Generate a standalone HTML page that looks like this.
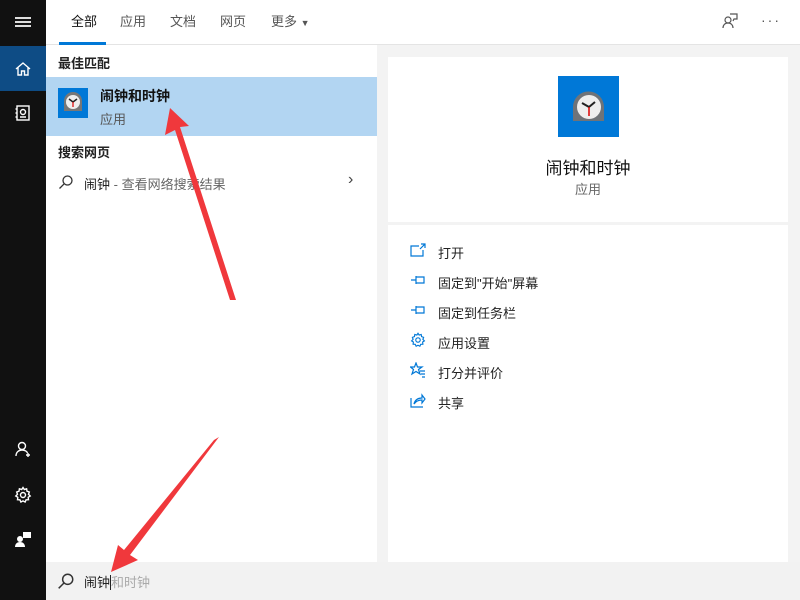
<!DOCTYPE html>
<html><head><meta charset="utf-8"><style>
*{margin:0;padding:0;box-sizing:border-box}
body{width:800px;height:600px;overflow:hidden;position:relative;background:#f3f3f3;font-family:"Liberation Sans","Noto Sans CJK SC",sans-serif;font-size:13px;color:#222}
.abs{position:absolute}
#side{left:0;top:0;width:46px;height:600px;background:#111}
#top{left:46px;top:0;width:754px;height:45px;background:#fff;border-bottom:1px solid #e4e4e4}
.tab{position:absolute;top:11px;font-size:13px;color:#555}
#left{left:46px;top:45px;width:331px;height:517px;background:#fff}
.card{background:#fff;left:388px;width:400px}
.act{position:absolute;left:438px;font-size:13px;color:#222}
.ico{position:absolute;left:410px}
</style></head><body>
<div id="side" class="abs">
 <div class="abs" style="left:15px;top:17px;width:16px;height:2px;background:#ddd;box-shadow:0 4px 0 #ddd,0 8px 0 #ddd"></div>
 <div class="abs" style="left:0;top:46px;width:46px;height:45px;background:#0e4c85"></div>
 <svg class="abs" style="left:14px;top:60px" width="18" height="18" viewBox="0 0 18 18" fill="none" stroke="#fff" stroke-width="1.4"><path d="M2 9L9 3l7 6M4 7.5V15h3.5v-4h3v4H14V7.5"/></svg>
 <svg class="abs" style="left:14px;top:104px" width="18" height="18" viewBox="0 0 18 18" fill="none" stroke="#fff" stroke-width="1.4"><rect x="3" y="2" width="12" height="14"/><circle cx="9" cy="8" r="2.5"/><path d="M3 5H1.5M3 9H1.5M3 13H1.5M6 13h6"/></svg>
 <svg class="abs" style="left:14px;top:440px" width="18" height="18" viewBox="0 0 18 18" fill="none" stroke="#fff" stroke-width="1.4"><circle cx="8" cy="6" r="3.5"/><path d="M2 16c0-4 3-6 6-6s5 1.5 5.5 3M14 13v4M12 15h4"/></svg>
 <svg class="abs" style="left:14px;top:486px" width="18" height="18" viewBox="0 0 18 18" fill="none" stroke="#fff" stroke-width="1.4"><circle cx="9" cy="9" r="2.5"/><path d="M9 1.5l1.3 2 2.3-.7.4 2.4 2.3.8-.8 2.3 1.7 1.7-2 1.3.3 2.4-2.4.1-1 2.2-2.1-1.1-2.1 1.1-1-2.2-2.4-.1.3-2.4-2-1.3 1.7-1.7-.8-2.3 2.3-.8.4-2.4 2.3.7z"/></svg>
 <svg class="abs" style="left:14px;top:530px" width="18" height="18" viewBox="0 0 18 18" fill="#fff"><circle cx="6" cy="9" r="3"/><path d="M1 17c0-3 2-5 5-5s5 2 5 5z"/><rect x="9" y="2" width="8" height="6"/></svg>
</div>
<div id="top" class="abs">
 <span class="tab" style="left:25px;color:#111">全部</span>
 <div class="abs" style="left:13px;top:42px;width:47px;height:3px;background:#0078d7"></div>
 <span class="tab" style="left:74px">应用</span>
 <span class="tab" style="left:124px">文档</span>
 <span class="tab" style="left:174px">网页</span>
 <span class="tab" style="left:225px">更多 <span style="font-size:9px">▼</span></span>
 <svg class="abs" style="left:675px;top:12px" width="18" height="18" viewBox="0 0 18 18" fill="none" stroke="#555" stroke-width="1.2"><circle cx="7" cy="8" r="3"/><path d="M2 16c0-3 2-5 5-5s5 2 5 5M9 2h7v5h-3l-1 2"/></svg>
 <span class="abs" style="left:715px;top:12px;color:#555;font-size:14px;letter-spacing:2px">···</span>
</div>
<div id="left" class="abs">
 <div class="abs" style="left:12px;top:8px;font-weight:bold;font-size:13px">最佳匹配</div>
 <div class="abs" style="left:0;top:32px;width:331px;height:59px;background:#b2d5f2"></div>
 <div class="abs" style="left:12px;top:43px;width:30px;height:30px;background:#0078d7">
  <svg width="30" height="30" viewBox="0 0 30 30"><path d="M6 23V13a9 9 0 0118 0v10z" fill="#777"/><circle cx="15" cy="14" r="7" fill="#eee"/><path d="M15 14l-4-3M15 14l4-3" stroke="#222" stroke-width="1.5"/><path d="M15 14v5" stroke="#d00" stroke-width="1.2"/></svg>
 </div>
 <div class="abs" style="left:54px;top:41px;font-weight:bold;font-size:14px;color:#111">闹钟和时钟</div>
 <div class="abs" style="left:54px;top:64px;color:#555">应用</div>
 <div class="abs" style="left:12px;top:97px;font-weight:bold">搜索网页</div>
 <svg class="abs" style="left:12px;top:129px" width="16" height="16" viewBox="0 0 16 16" fill="none" stroke="#333" stroke-width="1.3"><circle cx="9.5" cy="6.5" r="4.5"/><path d="M6.3 9.7L1.5 14.5"/></svg>
 <div class="abs" style="left:38px;top:129px">闹钟 <span style="color:#666">- 查看网络搜索结果</span></div>
 <div class="abs" style="left:302px;top:126px;font-size:16px;color:#444">›</div>
</div>
<div class="abs card" style="top:57px;height:165px">
 <div class="abs" style="left:170px;top:19px;width:61px;height:61px;background:#0078d7">
  <svg width="61" height="61" viewBox="0 0 61 61"><path d="M15 45V31a15.5 15.5 0 0131 0v14z" fill="#6f7378"/><circle cx="31" cy="31" r="12" fill="#eee"/><path d="M31 31l-7-4M31 31l6-5" stroke="#222" stroke-width="2"/><path d="M31 31v9" stroke="#d00" stroke-width="1.5"/></svg>
 </div>
 <div class="abs" style="left:0;width:400px;text-align:center;top:97px;font-size:17px;color:#111">闹钟和时钟</div>
 <div class="abs" style="left:0;width:400px;text-align:center;top:122px;color:#666">应用</div>
</div>
<div class="abs card" style="top:225px;height:337px"></div>
<svg class="ico" style="top:243px" width="16" height="14" viewBox="0 0 16 14" fill="none" stroke="#0078d7" stroke-width="1.2"><path d="M9 3H1v10h12V7M11 1h4v4M15 1l-5 5"/></svg>
<div class="act" style="top:243px">打开</div>
<svg class="ico" style="top:274px" width="16" height="12" viewBox="0 0 16 12" fill="none" stroke="#0078d7" stroke-width="1.2"><path d="M1 6h5M6 2v8M6 3h8v6H6"/></svg>
<div class="act" style="top:273px">固定到"开始"屏幕</div>
<svg class="ico" style="top:304px" width="16" height="12" viewBox="0 0 16 12" fill="none" stroke="#0078d7" stroke-width="1.2"><path d="M1 6h5M6 2v8M6 3h8v6H6"/></svg>
<div class="act" style="top:303px">固定到任务栏</div>
<svg class="ico" style="top:332px" width="16" height="16" viewBox="0 0 18 18" fill="none" stroke="#0078d7" stroke-width="1.3"><circle cx="9" cy="9" r="2.5"/><path d="M9 1.5l1.3 2 2.3-.7.4 2.4 2.3.8-.8 2.3 1.7 1.7-2 1.3.3 2.4-2.4.1-1 2.2-2.1-1.1-2.1 1.1-1-2.2-2.4-.1.3-2.4-2-1.3 1.7-1.7-.8-2.3 2.3-.8.4-2.4 2.3.7z"/></svg>
<div class="act" style="top:333px">应用设置</div>
<svg class="ico" style="top:362px" width="16" height="16" viewBox="0 0 16 16" fill="none" stroke="#0078d7" stroke-width="1.2"><path d="M6 1l1.5 4H12L8.5 7.5 10 12 6 9.5 2 12l1.5-4.5L0.5 5H4.5zM10 9h5M11 12h4M12 15h3"/></svg>
<div class="act" style="top:363px">打分并评价</div>
<svg class="ico" style="top:393px" width="16" height="15" viewBox="0 0 16 15" fill="none" stroke="#0078d7" stroke-width="1.2"><path d="M1 5v9h12M4 11c1-4 4-6 8-6V2l3 4-3 4V7c-3 0-6 1-8 4z"/></svg>
<div class="act" style="top:393px">共享</div>
<div class="abs" style="left:46px;top:562px;width:754px;height:38px;background:#f2f2f2"></div>
<svg class="abs" style="left:57px;top:572px" width="18" height="18" viewBox="0 0 16 16" fill="none" stroke="#333" stroke-width="1.3"><circle cx="9.5" cy="6.5" r="4.5"/><path d="M6.3 9.7L1.5 14.5"/></svg>
<div class="abs" style="left:84px;top:572px;font-size:13px;color:#222">闹钟<span style="border-left:1px solid #222;color:#aaa">和时钟</span></div>
<svg class="abs" style="left:0;top:0" width="800" height="600">
 <polygon points="236,300 230,300 175,130 165,135 170,108 189,126 180,127" fill="#f0383c"/>
 <polygon points="219,437 214,440 124,550 118,545 111,572 138,560 130,555" fill="#f0383c"/>
</svg>
</body></html>
